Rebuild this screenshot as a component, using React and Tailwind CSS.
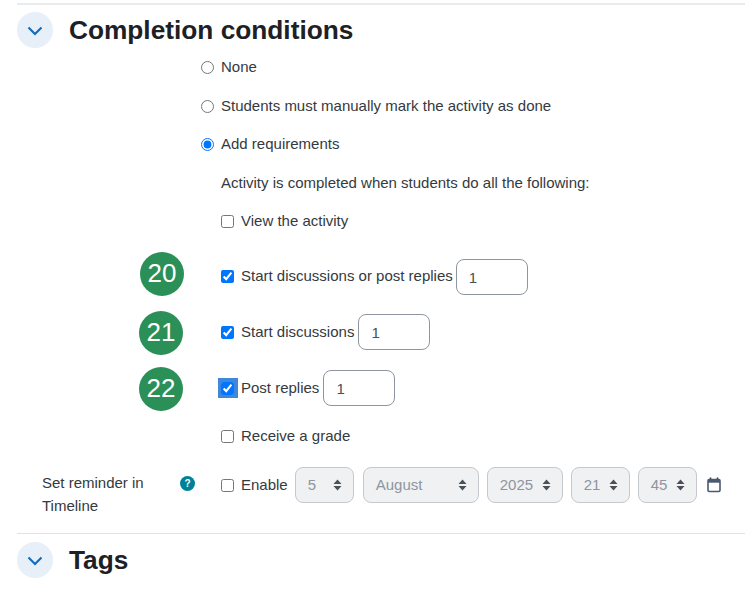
import React from "react";

function SectionHeader({ title, className }) {
  return (
    <div className={`flex items-center border-t border-[#dee2e6] ${className}`}>
      <span className="flex h-9 w-9 items-center justify-center rounded-full bg-[#e7eff8] pt-[1px]">
        <svg width="16" height="10" viewBox="0 0 16 10" fill="none" stroke="#0f6cbf" strokeWidth="2.1">
          <path d="M1.5 1.5 8 8l6.5-6.5" />
        </svg>
      </span>
      <h3 className="ml-4 text-[26.25px] leading-[31px] font-bold text-[#1d2125]">{title}</h3>
    </div>
  );
}

function Radio({ label, checked, className }) {
  return (
    <label className={`flex items-center gap-[7px] ${className}`}>
      <input type="radio" name="completion" defaultChecked={checked} className="m-0 h-[13px] w-[13px] accent-[#0075ff]" />
      <span>{label}</span>
    </label>
  );
}

function Check({ label, checked, focused, value, className, labelClass, badge, badgeClass }) {
  return (
    <div className={`relative flex items-center pl-[20px] ${className}`}>
      {badge && (
        <span className={`absolute flex h-[44px] w-[44px] items-center justify-center rounded-full bg-[#2b9058] pb-[3px] text-[26px] text-white ${badgeClass}`}>
          {badge}
        </span>
      )}
      <label className={`flex items-center gap-[7px] ${labelClass || ""}`}>
        <span className={focused ? "flex h-[20px] w-[20px] -mx-[3.5px] items-center justify-center bg-[#3f87d9]" : "flex"}>
          <input type="checkbox" defaultChecked={checked} className="m-0 h-[13px] w-[13px] accent-[#0075ff]" />
        </span>
        <span>{label}</span>
      </label>
      {value && (
        <input
          type="text"
          defaultValue={value}
          className="ml-1 h-[36px] w-[72px] rounded-lg border border-[#8f959e] bg-white px-3 text-[15px] text-[#495057]"
        />
      )}
    </div>
  );
}

function DateSelect({ value, width }) {
  return (
    <span className={`flex h-[36px] items-center justify-between rounded-lg border border-[#c5c9ce] bg-[#eff1f3] pr-[11px] pl-3 text-[#8f959e] ${width}`}>
      {value}
      <svg width="9" height="12" viewBox="0 0 9 12" className="fill-[#495057]">
        <path d="M4.5 0.5 8.5 5H0.5ZM4.5 11.5 0.5 7H8.5Z" />
      </svg>
    </span>
  );
}

export default function App() {
  return (
    <div className="h-[591px] w-[745px] overflow-hidden bg-white pt-[3px] pl-[17px] font-['Liberation_Sans',sans-serif] text-[15px] leading-[22px] text-[#343a40]">
      <SectionHeader title="Completion conditions" className="h-[46px] pt-[6px] border-t-2 border-[#e9ebed]" />

      <div className="pl-[184px]">
        <Radio label="None" className="mt-[7px]" />
        <Radio label="Students must manually mark the activity as done" className="mt-[17px]" />
        <Radio label="Add requirements" checked className="mt-[16px]" />
        <p className="mt-[17px] pl-[20px]">Activity is completed when students do all the following:</p>
        <Check label="View the activity" className="mt-[16px]" />
        <Check label="Start discussions or post replies" checked value="1" className="mt-[27px] pl-[20px]" labelClass="mb-[2px] mr-[-1px]" badge="20" badgeClass="left-[-61px] top-[-7px]" />
        <Check label="Start discussions" checked value="1" className="mt-[19px]" badge="21" badgeClass="left-[-62px] top-[-3px]" />
        <Check label="Post replies" checked focused value="1" className="mt-[20px]" badge="22" badgeClass="left-[-62px] top-[-3px]" />
        <Check label="Receive a grade" className="mt-[19px]" />
      </div>

      <div className="mt-[20px] flex items-start">
        <div className="flex w-[204px] pt-[4px] pl-[25px]">
          <span className="w-[137px] leading-[23px]">Set reminder in Timeline</span>
          <span className="mt-[5px] ml-[1px] flex h-[15px] w-[15px] items-center justify-center rounded-full bg-[#008196] text-[10px] font-bold text-white">?</span>
        </div>
        <label className="flex h-[36px] items-center gap-[7px]">
          <input type="checkbox" className="m-0 h-[13px] w-[13px] accent-[#0075ff]" />
          <span>Enable</span>
        </label>
        <div className="ml-[7px] flex items-center gap-[8px]">
          <span className="mr-[1px]">
            <DateSelect value="5" width="w-[59px]" />
          </span>
          <DateSelect value="August" width="w-[116px]" />
          <DateSelect value="2025" width="w-[76px]" />
          <DateSelect value="21" width="w-[59px]" />
          <DateSelect value="45" width="w-[59px]" />
          <svg width="14" height="16" viewBox="0 0 14 16" className="ml-[2px]">
            <path d="M3.5 0.5v3M10.5 0.5v3" stroke="#343a40" strokeWidth="1.6" />
            <rect x="1" y="2.5" width="12" height="12" rx="1.2" fill="none" stroke="#495b70" strokeWidth="1.6" />
            <rect x="1" y="2.5" width="12" height="3.2" fill="#495b70" />
          </svg>
        </div>
      </div>

      <SectionHeader title="Tags" className="mt-[16px] pt-[8px] pb-[2px]" />
    </div>
  );
}
